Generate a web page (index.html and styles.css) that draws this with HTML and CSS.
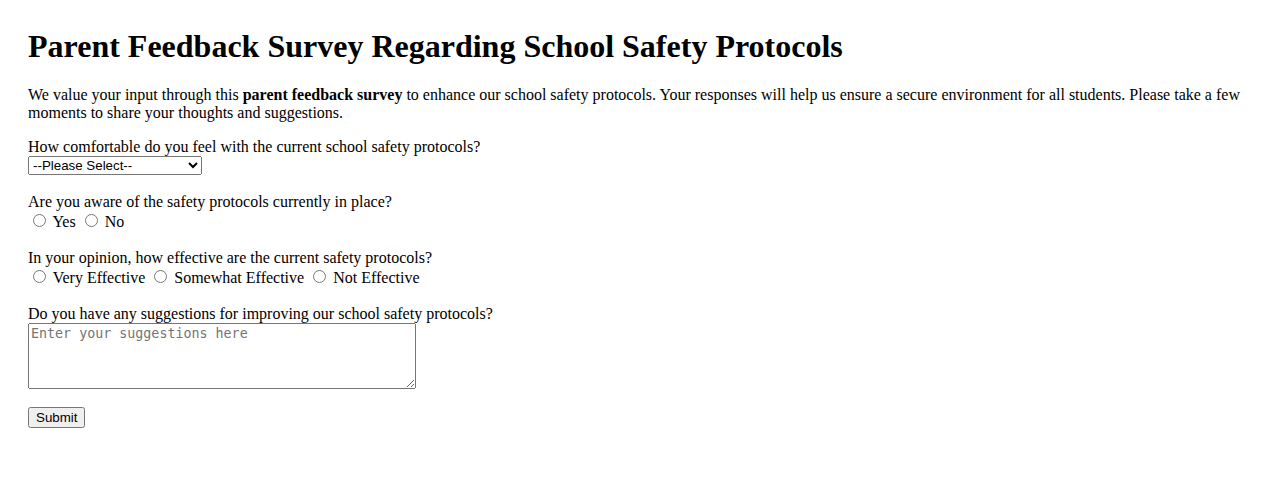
FILE: index.html
```html
<!DOCTYPE html>
<html lang="en">
<head>
<meta charset="utf-8">
<title>Parent Feedback Survey</title>
<link rel="stylesheet" href="styles.css">
</head>
<body>
<div class="page">
<h1 class="title">Parent Feedback Survey Regarding School Safety Protocols</h1>
<p class="intro">We value your input through this <strong>parent feedback survey</strong> to enhance our school safety protocols. Your responses will help us ensure a secure environment for all students. Please take a few moments to share your thoughts and suggestions.</p>
<form class="survey">
<label for="comfort">How comfortable do you feel with the current school safety protocols?</label><br>
<select id="comfort" name="comfort" class="choice">
<option value="">--Please Select--</option>
<option value="very">Very Comfortable</option>
<option value="somewhat">Somewhat Comfortable</option>
<option value="not">Not Comfortable</option>
</select><br><br>
<label>Are you aware of the safety protocols currently in place?</label><br>
<input type="radio" id="aware-yes" name="aware" value="yes"> <label for="aware-yes">Yes</label>
<input type="radio" id="aware-no" name="aware" value="no"> <label for="aware-no">No</label><br><br>
<label>In your opinion, how effective are the current safety protocols?</label><br>
<input type="radio" id="eff-very" name="eff" value="very"> <label for="eff-very">Very Effective</label>
<input type="radio" id="eff-some" name="eff" value="some"> <label for="eff-some">Somewhat Effective</label>
<input type="radio" id="eff-not" name="eff" value="not"> <label for="eff-not">Not Effective</label><br><br>
<label for="sugg">Do you have any suggestions for improving our school safety protocols?</label><br>
<textarea id="sugg" name="sugg" class="suggestions" rows="4" placeholder="Enter your suggestions here"></textarea><br><br>
<button type="submit" class="submit">Submit</button>
</form>
</div>
</body>
</html>
```
FILE: styles.css
```css
body {
  margin: 8px;
  font-family: "Liberation Serif", "Times New Roman", serif;
  font-size: 16px;
  color: #000;
  background: #fff;
}
.page {
  padding: 20px;
}
.title {
  font-size: 32px;
  margin: 0 0 21.44px;
}
.intro {
  margin: 16px 0;
}
.choice,
.submit {
  font-family: "Liberation Sans", Arial, sans-serif;
  font-size: 13.333px;
}
.choice {
  width: 174px;
  height: 19px;
}
.submit {
  padding: 1px 6px;
}
.suggestions {
  width: 388px;
  box-sizing: border-box;
  vertical-align: bottom;
  font-family: "DejaVu Sans Mono", monospace;
  font-size: 13.333px;
}
```
